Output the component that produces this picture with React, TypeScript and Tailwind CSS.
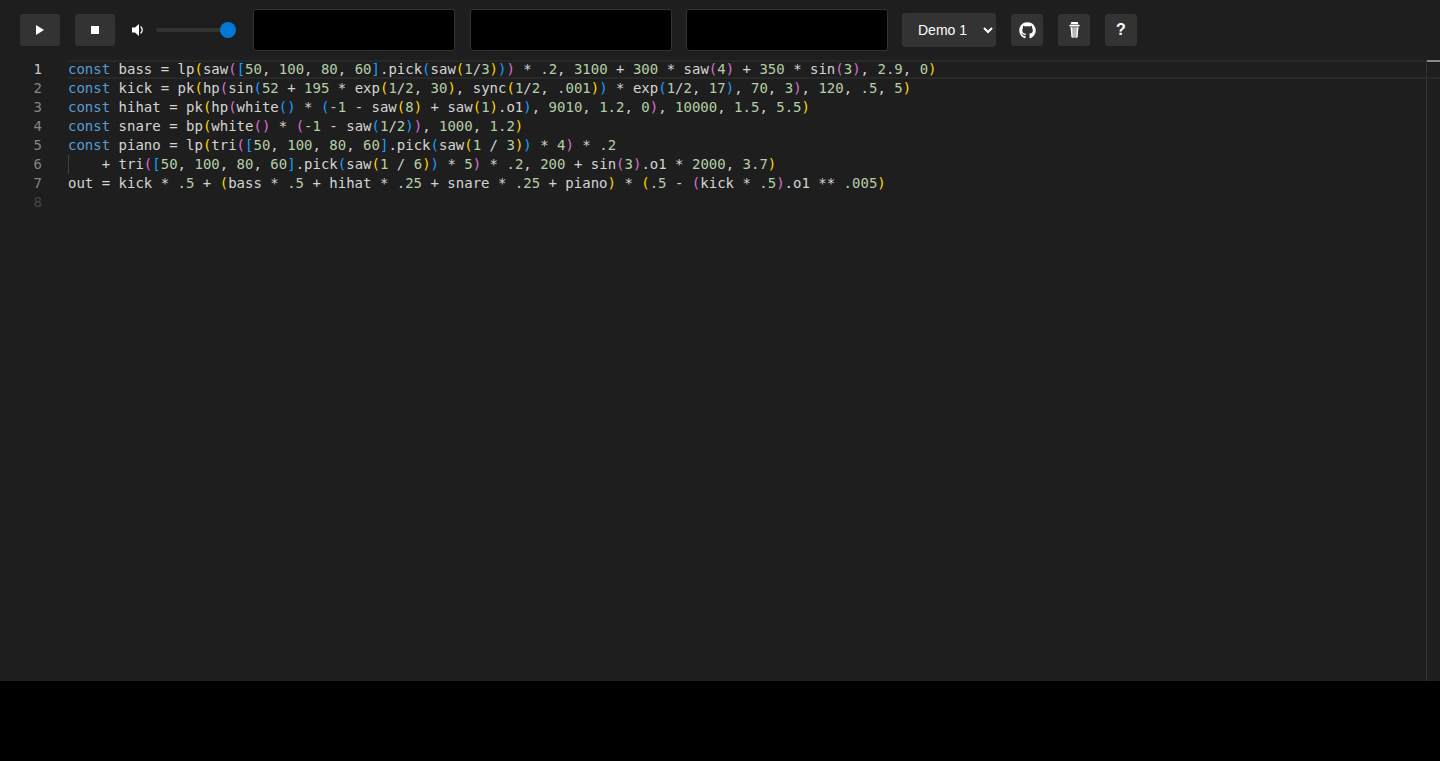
import { FaGithub } from "react-icons/fa";

const K = "text-[#569cd6]";
const N = "text-[#b5cea8]";
const Y = "text-[#ffd700]";
const P = "text-[#da70d6]";
const B = "text-[#179fff]";

// [text, colour] runs; plain strings take the editor's default colour
type Run = string | [string, string];

const lines: Run[][] = [
  [["const", K], " bass = lp", ["(", Y], "saw", ["(", P], ["[", B], ["50", N], ", ", ["100", N], ", ", ["80", N], ", ", ["60", N], ["]", B], ".pick", ["(", B], "saw", ["(", Y], ["1", N], "/", ["3", N], [")", Y], [")", B], [")", P], " * ", [".2", N], ", ", ["3100", N], " + ", ["300", N], " * saw", ["(", P], ["4", N], [")", P], " + ", ["350", N], " * sin", ["(", P], ["3", N], [")", P], ", ", ["2.9", N], ", ", ["0", N], [")", Y]],
  [["const", K], " kick = pk", ["(", Y], "hp", ["(", P], "sin", ["(", B], ["52", N], " + ", ["195", N], " * exp", ["(", Y], ["1", N], "/", ["2", N], ", ", ["30", N], [")", Y], ", sync", ["(", Y], ["1", N], "/", ["2", N], ", ", [".001", N], [")", Y], [")", B], " * exp", ["(", B], ["1", N], "/", ["2", N], ", ", ["17", N], [")", B], ", ", ["70", N], ", ", ["3", N], [")", P], ", ", ["120", N], ", ", [".5", N], ", ", ["5", N], [")", Y]],
  [["const", K], " hihat = pk", ["(", Y], "hp", ["(", P], "white", ["()", B], " * ", ["(", B], ["-1", N], " - saw", ["(", Y], ["8", N], [")", Y], " + saw", ["(", Y], ["1", N], [")", Y], ".o1", [")", B], ", ", ["9010", N], ", ", ["1.2", N], ", ", ["0", N], [")", P], ", ", ["10000", N], ", ", ["1.5", N], ", ", ["5.5", N], [")", Y]],
  [["const", K], " snare = bp", ["(", Y], "white", ["()", P], " * ", ["(", P], ["-1", N], " - saw", ["(", B], ["1", N], "/", ["2", N], [")", B], [")", P], ", ", ["1000", N], ", ", ["1.2", N], [")", Y]],
  [["const", K], " piano = lp", ["(", Y], "tri", ["(", P], ["[", B], ["50", N], ", ", ["100", N], ", ", ["80", N], ", ", ["60", N], ["]", B], ".pick", ["(", B], "saw", ["(", Y], ["1", N], " / ", ["3", N], [")", Y], [")", B], " * ", ["4", N], [")", P], " * ", [".2", N]],
  ["    + tri", ["(", P], ["[", B], ["50", N], ", ", ["100", N], ", ", ["80", N], ", ", ["60", N], ["]", B], ".pick", ["(", B], "saw", ["(", Y], ["1", N], " / ", ["6", N], [")", Y], [")", B], " * ", ["5", N], [")", P], " * ", [".2", N], ", ", ["200", N], " + sin", ["(", P], ["3", N], [")", P], ".o1 * ", ["2000", N], ", ", ["3.7", N], [")", Y]],
  ["out = kick * ", [".5", N], " + ", ["(", Y], "bass * ", [".5", N], " + hihat * ", [".25", N], " + snare * ", [".25", N], " + piano", [")", Y], " * ", ["(", Y], [".5", N], " - ", ["(", P], "kick * ", [".5", N], [")", P], ".o1 ** ", [".005", N], [")", Y]],
  [],
];

function IconButton({ children, className = "ml-[15px]" }: { children: React.ReactNode; className?: string }) {
  return (
    <button className={`flex h-8 items-center justify-center rounded-[3px] bg-[#333333] text-white ${className}`}>
      {children}
    </button>
  );
}

function Scope() {
  return <div className="h-[42px] w-[202px] rounded-[3px] border border-[#333333] bg-black" />;
}

export default function App() {
  return (
    <div className="min-h-[761px] bg-black font-['Liberation_Sans',sans-serif]">
      <div className="flex h-[60px] items-center bg-[#1e1e1e] pl-5">
        <IconButton className="w-10">
          <svg viewBox="0 0 8 10" className="h-[10px] w-2" fill="white">
            <path d="M0 0l8 5-8 5z" />
          </svg>
        </IconButton>
        <IconButton className="ml-[15px] w-10">
          <div className="size-2 bg-white" />
        </IconButton>
        <svg viewBox="0 0 13 12" className="ml-[17px] h-3 w-[13px]" fill="white">
          <path d="M0 3.5h3L7 0v12L3 8.5H0z" />
          <path d="M8.6 2.6a4.4 4.4 0 0 1 0 6.8" fill="none" stroke="white" strokeWidth="1.3" />
        </svg>
        <div className="relative ml-[11px] mr-[17px] h-1 w-[80px] rounded-full bg-[#333333]">
          <div className="absolute right-0 top-[-6px] size-4 rounded-full bg-[#0078d4]" />
        </div>
        <div className="flex gap-[14.5px]">
          <Scope />
          <Scope />
          <Scope />
        </div>
        <select
          defaultValue="Demo 1"
          className="ml-[14px] h-[34px] w-[94px] rounded-[3px] bg-[#333333] pl-[12px] text-[14px] text-white"
        >
          <option>Demo 1</option>
          <option>Demo 2</option>
        </select>
        <IconButton className="ml-[15px] w-8">
          <FaGithub className="text-[17px]" />
        </IconButton>
        <IconButton className="ml-[15px] w-8">
          {/* to-go cup */}
          <svg viewBox="0 0 11 16" className="h-4 w-[11px]">
            <path d="M2.2 0h6.6l.5 2.2H1.7z" fill="white" />
            <rect x="0.4" y="2.8" width="10.2" height="1.6" rx=".4" fill="white" />
            <path d="M1.6 5.2h7.8l-.9 9.6a1 1 0 0 1-1 1H3.5a1 1 0 0 1-1-1z" fill="#b8b8b8" />
            <path d="M1.6 5.2h1.4l.7 10.6h-.2a1 1 0 0 1-1-1zM9.4 5.2H8l-.7 10.6h.2a1 1 0 0 0 1-1z" fill="white" />
          </svg>
        </IconButton>
        <IconButton className="ml-[15px] w-8">
          <span className="text-[16px] font-bold leading-none">?</span>
        </IconButton>
      </div>

      <div className="relative flex h-[621px] overflow-hidden bg-[#1e1e1e] font-['DejaVu_Sans_Mono',monospace] text-[14px] leading-[19px] text-[#d4d4d4]">
        <div className="w-[68px] shrink-0">
          {lines.map((_, i) => (
            <div key={i} className={`h-[19px] w-[42px] text-right ${i === 0 ? "text-[#c6c6c6]" : i === 7 ? "text-[#454545]" : "text-[#858585]"}`}>
              {i + 1}
            </div>
          ))}
        </div>
        <div className="grow">
          {lines.map((line, i) => (
            <div key={i} className="relative h-[19px] whitespace-pre">
              {i === 5 && <div className="absolute left-0 top-0 h-full w-px bg-[#404040]" />}
              {line.map((run, j) =>
                typeof run === "string" ? (
                  <span key={j}>{run}</span>
                ) : (
                  <span key={j} className={run[1]}>
                    {run[0]}
                  </span>
                ),
              )}
            </div>
          ))}
        </div>
        {/* current line highlight + overview ruler lie over the text area */}
        <div className="pointer-events-none absolute left-[68px] right-0 top-0 h-[19px] border-y-2 border-[#282828]" />
        <div className="absolute right-[13px] top-0 h-full w-px bg-[#333333]" />
        <div className="absolute right-0 top-0 h-[2px] w-[13px] bg-[#8a8a8a]" />
      </div>
    </div>
  );
}
